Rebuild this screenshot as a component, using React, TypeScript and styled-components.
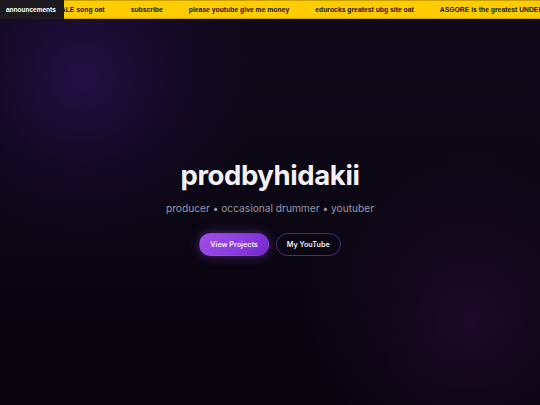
import React from "react";
import styled, { createGlobalStyle } from "styled-components";

const Global = createGlobalStyle`
  html, body { margin: 0; padding: 0; background: #0a0612; }
  body { font-family: Inter, "Noto Sans", sans-serif; }
  * { box-sizing: border-box; }
`;

const Page = styled.div`
  width: 100%;
  min-height: 100vh;
  display: flex;
  flex-direction: column;
  overflow: hidden;
  background:
    radial-gradient(circle at 82px 78px, rgba(52, 22, 104, 0.55) 0px, rgba(38, 14, 78, 0.25) 95px, rgba(10, 6, 18, 0) 175px),
    radial-gradient(circle at 470px 320px, rgba(58, 16, 70, 0.42) 0px, rgba(40, 12, 56, 0.2) 95px, rgba(10, 6, 18, 0) 170px),
    linear-gradient(180deg, #0e0919 0%, #0a0612 60%, #07040d 100%);
`;

const Ticker = styled.div`
  display: flex;
  height: 19px;
  align-items: stretch;
  font-family: "Liberation Sans", Arial, sans-serif;
  font-weight: 700;
  font-size: 6.8px;
`;

const Label = styled.div`
  flex: none;
  width: 64px;
  display: flex;
  align-items: center;
  padding-left: 6px;
  background: #1c1a1f;
  color: #ffffff;
  font-size: 6.5px;
  white-space: nowrap;
`;

const Track = styled.div`
  flex: 1;
  display: flex;
  align-items: center;
  overflow: hidden;
  white-space: nowrap;
  background: #ffcc00;
  border-top: 1px solid #c9a000;
  border-bottom: 1px solid #c9a000;
  color: #1a1400;
`;

const Items = styled.div`
  display: flex;
  gap: 26px;
  margin-left: -31px;
`;

const Item = styled.span`
  flex: none;
`;

const Hero = styled.main`
  flex: 1;
  display: flex;
  flex-direction: column;
  align-items: center;
  justify-content: center;
  padding-bottom: 8px;
`;

const Title = styled.h1`
  margin: 0;
  font-family: Inter, sans-serif;
  font-weight: 700;
  font-size: 27.5px;
  letter-spacing: -0.4px;
  color: #f4f2f8;
  line-height: 1.1;
`;

const Subtitle = styled.p`
  margin: 11px 0 0;
  font-family: Inter, sans-serif;
  font-size: 10.2px;
  color: #9b96a8;
  line-height: 1.3;
`;

const Actions = styled.div`
  display: flex;
  gap: 7px;
  margin-top: 18px;
`;

const Button = styled.a<{ $primary?: boolean }>`
  display: inline-flex;
  align-items: center;
  justify-content: center;
  height: 23px;
  padding: 0 10px;
  border-radius: 999px;
  font-family: Inter, sans-serif;
  font-weight: 600;
  font-size: 7.2px;
  color: #f4f0fa;
  text-decoration: none;
  ${(p) =>
    p.$primary
      ? `
    background: linear-gradient(135deg, #a04fe6 0%, #8a3be0 60%, #7226c8 100%);
    box-shadow: 0 0 12px rgba(150, 70, 230, 0.45);
    border: 1px solid transparent;
  `
      : `
    background: transparent;
    border: 1px solid #4f2c74;
  `}
`;

const items = [
  "UNDERTALE song oat",
  "subscribe",
  "please youtube give me money",
  "edurocks greatest ubg site oat",
  "ASGORE is the greatest UNDERTALE character",
];

export default function App() {
  return (
    <>
      <Global />
      <Page>
        <Ticker>
          <Label>announcements</Label>
          <Track>
            <Items>
              {items.map((t) => (
                <Item key={t}>{t}</Item>
              ))}
            </Items>
          </Track>
        </Ticker>
        <Hero>
          <Title>prodbyhidakii</Title>
          <Subtitle>producer • occasional drummer • youtuber</Subtitle>
          <Actions>
            <Button $primary href="#projects">View Projects</Button>
            <Button href="#youtube">My YouTube</Button>
          </Actions>
        </Hero>
      </Page>
    </>
  );
}
